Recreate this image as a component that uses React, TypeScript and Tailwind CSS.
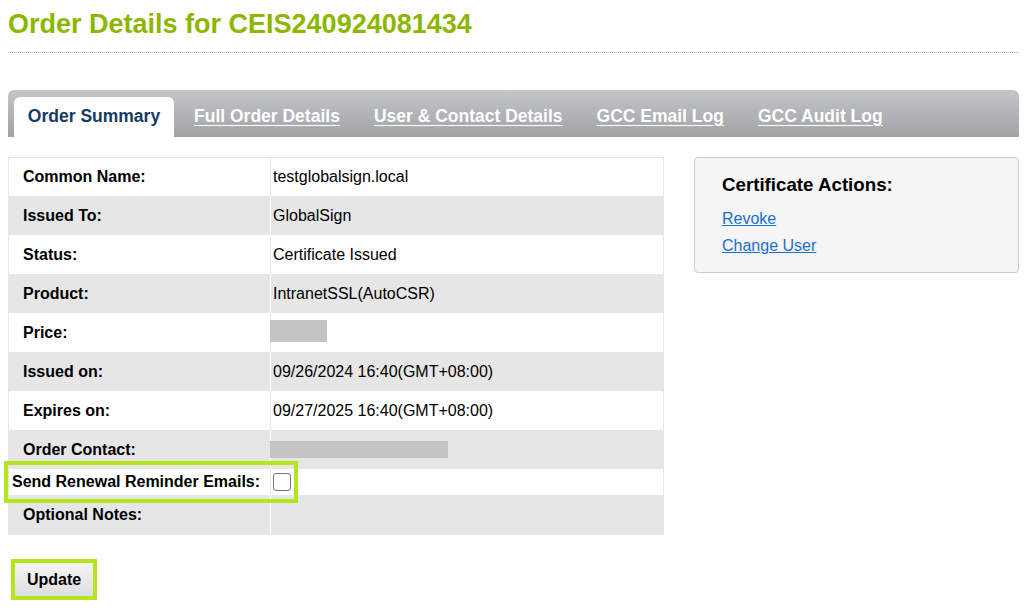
import React from "react";

const rows: { label: string; value?: string; redact?: number; shade: boolean }[] = [
  { label: "Common Name:", value: "testglobalsign.local", shade: false },
  { label: "Issued To:", value: "GlobalSign", shade: true },
  { label: "Status:", value: "Certificate Issued", shade: false },
  { label: "Product:", value: "IntranetSSL(AutoCSR)", shade: true },
  { label: "Price:", redact: 57, shade: false },
  { label: "Issued on:", value: "09/26/2024 16:40(GMT+08:00)", shade: true },
  { label: "Expires on:", value: "09/27/2025 16:40(GMT+08:00)", shade: false },
  { label: "Order Contact:", redact: 178, shade: true },
];

const tabs = ["Full Order Details", "User & Contact Details", "GCC Email Log", "GCC Audit Log"];

function Row({ label, value, redact, shade, first }: (typeof rows)[number] & { first?: boolean }) {
  return (
    <div className={`flex ${first ? "h-[38px]" : "h-[39px]"} ${shade ? "bg-[#e6e6e6]" : "bg-white"}`}>
      <div
        className={`w-[262px] shrink-0 pl-[14px] flex items-center font-bold border-r ${
          shade ? "border-white" : "border-[#e6e6e6]"
        }`}
      >
        {label}
      </div>
      <div className="flex-1 flex items-center pl-[2px]">
        {value ? (
          value
        ) : (
          <span
            className={`block bg-[#c3c3c3] -ml-[3px] ${redact === 57 ? "h-[22px] mb-[3px]" : "h-[17px] mb-[1px]"}`}
            style={{ width: redact }}
          />
        )}
      </div>
    </div>
  );
}

export default function App() {
  return (
    <div className="relative w-[1027px] h-[613px] bg-white text-black text-[16px] font-['Liberation_Sans',Arial,sans-serif] px-[8px] overflow-hidden">
      {/* Page title */}
      <h1 className="text-[27px] font-bold text-[#8db600] leading-none pt-[11px] pb-[14px] border-b border-dotted border-[#b8b8b8] w-[1011px]">
        Order Details for CEIS240924081434
      </h1>

      {/* Tab bar */}
      <div className="mt-[37px] w-[1011px] h-[47px] rounded-t-[6px] bg-gradient-to-b from-[#c3c5c9] to-[#a1a3a7] flex items-end pl-[6px]">
        <div className="h-[40px] w-[160px] pb-[2px] rounded-t-[6px] bg-white flex items-center justify-center text-[17.5px] font-bold text-[#163a63]">
          Order Summary
        </div>
        <div className="flex items-center h-[40px] pb-[2px] pl-[20px] gap-[34px]">
          {tabs.map((t) => (
            <a key={t} className="text-[17.5px] font-bold text-white underline underline-offset-[3px] cursor-pointer">
              {t}
            </a>
          ))}
        </div>
      </div>

      <div className="flex items-start mt-[20px] gap-[30px]">
        {/* Summary table */}
        <div className="w-[656px] border border-[#e6e6e6]">
          {rows.map((r, i) => (
            <Row key={r.label} {...r} first={i === 0} />
          ))}
          <div className="flex h-[26px] bg-white">
            <div className="w-[262px] shrink-0 pl-[3px] flex items-center font-bold border-r border-[#e6e6e6]">
              Send Renewal Reminder Emails:
            </div>
            <div className="flex-1 flex items-center pl-[2px]">
              <span className="block w-[18px] h-[18px] rounded-[3px] border border-[#767676] bg-white" />
            </div>
          </div>
          <div className="flex h-[39px] bg-[#e6e6e6]">
            <div className="w-[262px] shrink-0 pl-[14px] flex items-center font-bold border-r border-white">
              Optional Notes:
            </div>
            <div className="flex-1" />
          </div>
        </div>

        {/* Certificate actions */}
        <div className="w-[325px] h-[116px] bg-[#f5f5f5] border border-[#cccccc] rounded-[4px] pl-[27px] pt-[18px]">
          <h3 className="text-[18.72px] font-bold leading-none">Certificate Actions:</h3>
          <div className="flex flex-col gap-[8px] mt-[14px] leading-[19px]">
            <a className="text-[#1a6fcf] underline cursor-pointer">Revoke</a>
            <a className="text-[#1a6fcf] underline cursor-pointer">Change User</a>
          </div>
        </div>
      </div>

      {/* Update button */}
      <div className="mt-[24px] ml-[3px] w-[86px] h-[41px] border-[4px] border-[#b5e61d] flex">
        <button className="flex-1 bg-gradient-to-b from-[#f6f6f6] to-[#dedede] font-bold text-[16px]">
          Update
        </button>
      </div>

      {/* highlight annotation on renewal row */}
      <div className="absolute left-[4px] top-[461px] w-[294px] h-[42px] border-[4px] border-[#b5e61d] pointer-events-none" />
    </div>
  );
}
